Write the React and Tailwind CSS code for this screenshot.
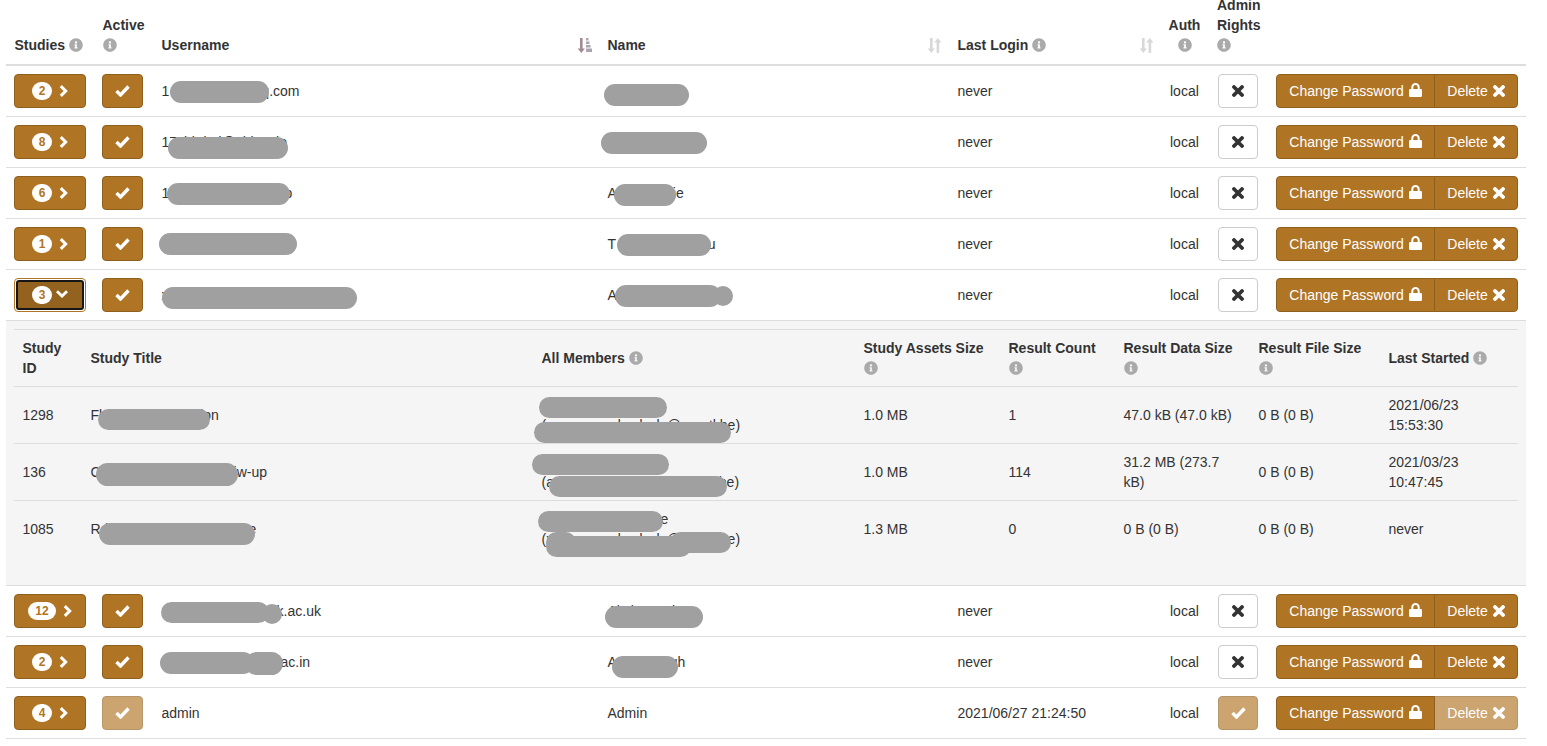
import React from "react";
import { FaInfoCircle } from "react-icons/fa";

const Info = () => <FaInfoCircle className="inline-block text-[#aaaaaa] text-[14px] align-[-2px]" />;

const SortBoth = () => (
  <svg width="15" height="15" viewBox="0 0 15 15" className="block text-[#d8d8d8]" fill="currentColor">
    <path d="M3 0h2.600v10.500h2.300L4.300 15 .7 10.500H3z" />
    <path d="M10.800 0l3.700 4.500h-2.300V15H9.600V4.500H7.200z" />
  </svg>
);

const SortAsc = () => (
  <svg width="15" height="15" viewBox="0 0 15 15" className="block" fill="none">
    <path d="M3 0h2.600v10.500h2.300L4.300 15 .7 10.500H3z" fill="#a38a92" />
    <path d="M9 0h2.500v2.500H9zM9 3.500h3.500V6H9zM9 7h4.500v2.500H9zM9 10.500h6V14H9z" fill="#a9a3b4" />
  </svg>
);

const ChevronRight = () => (
  <svg width="9" height="12" viewBox="0 0 9 12" className="block" fill="none" stroke="currentColor" strokeWidth="3">
    <path d="M1.800 1.100L6.700 6 1.800 10.900" />
  </svg>
);

const ChevronDown = () => (
  <svg width="12" height="8" viewBox="0 0 12 8" className="block -translate-y-[1px]" fill="none" stroke="currentColor" strokeWidth="2.800">
    <path d="M1 1.200L6 6 11 1.200" />
  </svg>
);

const Check = () => (
  <svg width="15" height="12" viewBox="0 0 15 12" className="block" fill="none" stroke="currentColor" strokeWidth="3.400">
    <path d="M1.500 6L5.500 10 13.500 1.500" />
  </svg>
);

const Cross = () => (
  <svg width="12" height="12" viewBox="0 0 12 12" className="block" fill="none" stroke="currentColor" strokeWidth="3.800" strokeLinecap="round">
    <path d="M2 2L10 10M10 2L2 10" />
  </svg>
);

const Lock = () => (
  <svg width="13" height="14" viewBox="0 0 13 14" className="block -translate-y-[1px]" fill="currentColor">
    <path d="M3.300 6.500V4.300a3.200 3.200 0 0 1 6.400 0V6.500" fill="none" stroke="currentColor" strokeWidth="2" />
    <rect x="0" y="6" width="13" height="8" rx="1.300" />
  </svg>
);

const Pill = ({ className }) => (
  <span className={"absolute block rounded-full bg-[#a0a0a0] " + className} />
);

const brown = "bg-[#b07524] border border-[#8f5f1d] text-white";

const users = [
  { n: "2", u: "1\u00a0\u00a023456789@qq.com", name: "xxxxx xxxxx", last: "never",
    pills: ["left-[8.5px] top-0 w-[99px] h-[22px]"],
    npills: ["-left-[3.5px] top-[3px] w-[85px] h-[22px]"] },
  { n: "8", u: "17xbkdxd@xbkxmio", name: "xxxxx xxxxx", last: "never",
    pills: ["left-[6.5px] top-[5px] w-[120px] h-[22px]"],
    npills: ["-left-[6.5px] top-0 w-[106px] h-[22px]"] },
  { n: "6", u: "1xxxxxxxxxxxxxxxxip", name: "Axxxxxxxxie", last: "never",
    pills: ["left-[5.5px] top-0 w-[123px] h-[22px]"],
    npills: ["left-[6.5px] top-[1px] w-[62px] h-[22px]"] },
  { n: "1", u: "xxxxxxxxxxxxxxxxx", name: "T\u00a0\u00a0xxxxxxxxxxxxu", last: "never",
    pills: ["-left-[2.500px] -top-[1px] w-[138px] h-[22px]"],
    npills: ["left-[9.500px] top-0 w-[94px] h-[22px]"] },
  { n: "3", u: "xxxxxxxxxxxxxxxxxxxxxxxxxx", name: "Axxxxxxxxxxxxx", last: "never", open: true,
    pills: ["left-[0.500px] top-[2px] w-[195px] h-[22px]"],
    npills: ["left-[7.500px] top-0 w-[106px] h-[22px]", "left-[105.500px] top-[1px] w-[20px] h-[20px]"] },
  { n: "12", u: "xxxxxxxxxxxxxxxxik.ac.uk", name: "Akxkx Sxxkxx", last: "never",
    pills: ["-left-[0.500px] top-[1px] w-[108px] h-[21px]", "left-[100.500px] top-[3px] w-[20px] h-[20px]"],
    npills: ["-left-[2.500px] top-[5px] w-[98px] h-[22px]"] },
  { n: "2", u: "xxxxxxxxxxxxxxxxi.ac.in", name: "Adixxxxxxgh", last: "never",
    pills: ["-left-[1.500px] top-0 w-[94px] h-[22px]", "left-[83.500px] top-0 w-[38px] h-[23px]"],
    npills: ["left-[4.500px] top-[4px] w-[66px] h-[22px]"] },
  { n: "4", u: "admin", name: "Admin", last: "2021/06/27 21:24:50", admin: true },
];

const studies = [
  { id: "1298", title: "Flxxxxxxxxxxxxxxion", m1: "xxxxxxxxxxxxxx", m2: "(xxxxx.xxxxdxxdxxlx@xxxxtl.be)", size: "1.0 MB", count: "1",
    data: "47.0 kB (47.0 kB)", file: "0 B (0 B)", last: ["2021/06/23", "15:53:30"],
    tp: ["left-[7.500px] top-[4px] w-[112px] h-[21px]"],
    mp: ["-left-[2.500px] top-[2px] w-[128px] h-[21px]", "-left-[7.500px] top-[27px] w-[197px] h-[21px]"] },
  { id: "136", title: "Cxxxxxxxxxxxxxxxxxxxiw-up", m1: "xxxxxxxxxxxxxx", m2: "(axxxxxxxxxxxxxxxxxxxxxxx.be)", size: "1.0 MB", count: "114",
    data: "31.2 MB (273.7 kB)", file: "0 B (0 B)", last: ["2021/03/23", "10:47:45"],
    tp: ["left-[5.500px] top-[1px] w-[142px] h-[23px]"],
    mp: ["-left-[9.500px] top-[2px] w-[137px] h-[21px]", "left-[7.500px] top-[24px] w-[178px] h-[21px]"] },
  { id: "1085", title: "Rdxkxhbxxkxdxbxhxxxiline", m1: "xxxxxxxxxxxxxxxxxe", m2: "(xxxxx.xxxxdxxdxxlx@xxxxtl.be)", size: "1.3 MB", count: "0",
    data: "0 B (0 B)", file: "0 B (0 B)", last: ["never"],
    tp: ["left-[8.500px] top-[4px] w-[156px] h-[22px]"],
    mp: ["-left-[3.500px] top-[2px] w-[125px] h-[21px]",
         "left-[4.500px] top-[23px] w-[30px] h-[21px]",
         "left-[4.500px] top-[27px] w-[145px] h-[21px]",
         "left-[128.500px] top-[23px] w-[61px] h-[21px]"] },
];

const sub = "py-2 pr-2 pl-[8.5px]";

function StudiesTable() {
  return (
    <table className="w-[1504px] table-fixed border-collapse mb-[20px] border-t border-[#dddddd]">
      <colgroup>
        <col className="w-[68px]" />
        <col className="w-[451px]" />
        <col className="w-[322px]" />
        <col className="w-[145px]" />
        <col className="w-[115px]" />
        <col className="w-[135px]" />
        <col className="w-[130px]" />
        <col className="w-[138px]" />
      </colgroup>
      <thead>
        <tr className="border-b border-[#dddddd] text-left align-middle font-bold">
          <th className={sub}>Study ID</th>
          <th className={sub}>Study Title</th>
          <th className={sub}>All Members <Info /></th>
          <th className={sub}>Study Assets Size <Info /></th>
          <th className={sub}>Result Count <Info /></th>
          <th className={sub}>Result Data Size <Info /></th>
          <th className={sub}>Result File Size <Info /></th>
          <th className={sub}>Last Started <Info /></th>
        </tr>
      </thead>
      <tbody>
        {studies.map((s) => (
          <tr key={s.id} className="border-b border-[#dddddd] last:border-b-0 align-middle h-[57px]">
            <td className={sub}>{s.id}</td>
            <td className={sub}>
              <div className="relative whitespace-nowrap">
                {s.title}
                {s.tp.map((c) => <Pill key={c} className={c} />)}
              </div>
            </td>
            <td className={sub}>
              <div className="relative">
                <div>{s.m1}</div>
                <div className="whitespace-nowrap">{s.m2}</div>
                {s.mp.map((c) => <Pill key={c} className={c} />)}
              </div>
            </td>
            <td className={sub}>{s.size}</td>
            <td className={sub}>{s.count}</td>
            <td className={sub}>{s.data}</td>
            <td className={sub}>{s.file}</td>
            <td className={sub}>{s.last.map((l) => <div key={l}>{l}</div>)}</td>
          </tr>
        ))}
      </tbody>
    </table>
  );
}

function UserRow({ r }) {
  const fade = "opacity-[0.65]";
  const text = "py-0 pr-2 pl-[8.5px]";
  return (
    <>
      <tr className="border-b border-[#dddddd] h-[51px] align-middle">
        <td className="px-2 py-0">
          {r.open ? (
            <span className="block w-[72px] h-[34px] rounded-[4px] bg-white border border-[#b07524] p-px">
              <span className="flex items-center justify-center gap-[4px] w-full h-full rounded-[3px] bg-[#93621f] border-[2px] border-[#161616] text-white">
                <span className="rounded-[10px] bg-white text-[#b07524] text-[12px] font-bold leading-none px-[7px] py-[3px]">{r.n}</span>
                <ChevronDown />
              </span>
            </span>
          ) : (
            <span className={"flex items-center justify-center gap-[7px] w-[72px] h-[34px] rounded-[4px] " + brown}>
              <span className="rounded-[10px] bg-white text-[#b07524] text-[12px] font-bold leading-none px-[7px] py-[3px]">{r.n}</span>
              <ChevronRight />
            </span>
          )}
        </td>
        <td className="px-2 py-0">
          <span className={"flex items-center justify-center w-[41px] h-[34px] rounded-[4px] " + brown + (r.admin ? " " + fade : "")}>
            <Check />
          </span>
        </td>
        <td className={text}>
          <div className="relative whitespace-nowrap">
            {r.u}
            {r.pills && r.pills.map((c) => <Pill key={c} className={c} />)}
          </div>
        </td>
        <td className={text}>
          <div className="relative whitespace-nowrap">
            {r.name}
            {r.npills && r.npills.map((c) => <Pill key={c} className={c} />)}
          </div>
        </td>
        <td className={text}>{r.last}</td>
        <td className="px-2 py-0">local</td>
        <td className="px-2 py-0">
          {r.admin ? (
            <span className={"flex items-center justify-center w-[40px] h-[34px] rounded-[4px] " + brown + " " + fade}>
              <Check />
            </span>
          ) : (
            <span className="flex items-center justify-center w-[40px] h-[34px] rounded-[4px] bg-white border border-[#cccccc] text-[#333333]">
              <Cross />
            </span>
          )}
        </td>
        <td className="px-2 py-0">
          <div className="flex w-[242px] h-[34px]">
            <span className={"flex items-center justify-center gap-[5px] w-[159px] rounded-l-[4px] " + brown}>
              Change Password <Lock />
            </span>
            <span className={"flex items-center justify-center gap-[5px] w-[84px] -ml-px rounded-r-[4px] " + brown + (r.admin ? " " + fade : "")}>
              Delete <Cross />
            </span>
          </div>
        </td>
      </tr>
      {r.open && (
        <tr className="border-b border-[#dddddd] bg-[#f5f5f5]">
          <td colSpan={8} className="p-2">
            <StudiesTable />
          </td>
        </tr>
      )}
    </>
  );
}

export default function App() {
  const th = "pt-2 pb-[9px] pr-2 pl-[8.5px]";
  return (
    <div className="h-[746px] w-[1547px] overflow-hidden bg-white text-[14px] leading-[20px] text-[#333333] font-['Liberation_Sans',Arial,sans-serif]">
      <div className="-mt-[13px] px-[6px]">
        <table className="w-[1520px] table-fixed border-collapse">
          <colgroup>
            <col className="w-[88px]" />
            <col className="w-[59px]" />
            <col className="w-[446px]" />
            <col className="w-[350px]" />
            <col className="w-[213px]" />
            <col className="w-[48px]" />
            <col className="w-[58px]" />
            <col className="w-[258px]" />
          </colgroup>
          <thead>
            <tr className="border-b-[2px] border-[#dddddd] text-left font-bold align-bottom">
              <th className={th + " whitespace-nowrap"}>Studies <Info /></th>
              <th className={th}>Active <Info /></th>
              <th className={th}>
                <div className="flex items-center justify-between">Username <span className="-mr-[1px]"><SortAsc /></span></div>
              </th>
              <th className={th}>
                <div className="flex items-center justify-between">Name <span className="-mr-[1px]"><SortBoth /></span></div>
              </th>
              <th className={th}>
                <div className="flex items-center justify-between"><span>Last Login <Info /></span><SortBoth /></div>
              </th>
              <th className="pt-2 pb-[9px] pl-0 pr-[3px] text-center"><div>Auth</div><Info /></th>
              <th className="pt-2 pb-[9px] pr-1 pl-[7px]">Admin Rights <Info /></th>
              <th className={th}></th>
            </tr>
          </thead>
          <tbody>
            {users.map((r, i) => <UserRow key={i} r={r} />)}
          </tbody>
        </table>
      </div>
    </div>
  );
}
